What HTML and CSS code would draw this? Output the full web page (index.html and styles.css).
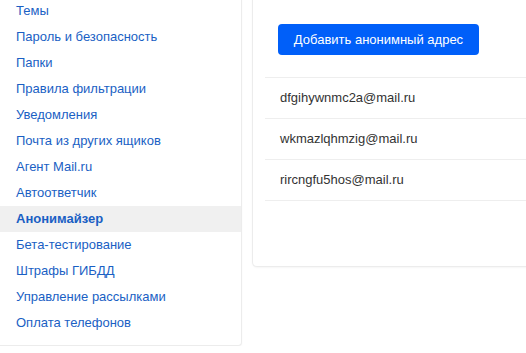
FILE: index.html
```html
<!DOCTYPE html>
<html lang="ru">
<head>
    <meta charset="UTF-8">
    <meta name="viewport" content="width=device-width, initial-scale=1.0">
    <title>Анонимайзер</title>
    <link rel="stylesheet" href="styles.css">
</head>
<body>
    <div class="page">
        <div class="settings-menu">
            <a class="menu-item" href="#">Личные данные</a>
            <a class="menu-item" href="#">Работа с письмами</a>
            <a class="menu-item" href="#">Темы</a>
            <a class="menu-item" href="#">Пароль и безопасность</a>
            <a class="menu-item" href="#">Папки</a>
            <a class="menu-item" href="#">Правила фильтрации</a>
            <a class="menu-item" href="#">Уведомления</a>
            <a class="menu-item" href="#">Почта из других ящиков</a>
            <a class="menu-item" href="#">Агент Mail.ru</a>
            <a class="menu-item" href="#">Автоответчик</a>
            <a class="menu-item menu-item-active" href="#">Анонимайзер</a>
            <a class="menu-item" href="#">Бета-тестирование</a>
            <a class="menu-item" href="#">Штрафы ГИБДД</a>
            <a class="menu-item" href="#">Управление рассылками</a>
            <a class="menu-item" href="#">Оплата телефонов</a>
        </div>
        <div class="content-card">
            <p class="content-text">Используйте анонимные адреса, чтобы не показывать свой адрес</p>
            <button class="add-btn">Добавить анонимный адрес</button>
            <ul class="address-list">
                <li class="address-row">dfgihywnmc2a@mail.ru</li>
                <li class="address-row">wkmazlqhmzig@mail.ru</li>
                <li class="address-row">rircngfu5hos@mail.ru</li>
            </ul>
        </div>
    </div>
</body>
</html>
```

FILE: styles.css
```css
:root {
    --link-color: #1a5fc4;
    --btn-color: #005ff9;
    --line-color: #eeeeee;
}
body{
    margin: 0;
    background: #fff;
    font-family: "Liberation Sans", Arial, sans-serif;
    overflow: hidden;
}
.page{
    display: flex;
    align-items: flex-start;
    gap: 10px;
    width: 700px;
    margin-top: -60px;
}
.settings-menu{
    display: flex;
    flex-direction: column;
    flex: none;
    width: 241px;
    padding: 5px 0 9px;
    background: #fff;
    border: 1px solid #ececec;
    border-left: none;
    border-radius: 0 0 4px 0;
    box-shadow: 0 1px 2px rgba(0,0,0,0.04);
}
.menu-item{
    display: block;
    height: 26px;
    line-height: 26px;
    padding-left: 16px;
    font-size: 13px;
    color: var(--link-color);
    text-decoration: none;
}
.menu-item-active{
    font-weight: bold;
    background: #f0f0f0;
}
.content-card{
    flex: 1;
    padding: 40px 0 65px 12px;
    background: #fff;
    border: 1px solid #ececec;
    border-right: none;
    border-radius: 0 0 0 5px;
    box-shadow: 0 1px 2px rgba(0,0,0,0.04);
}
.content-text{
    margin: 0 0 23px 13px;
    font-size: 13px;
    line-height: 20px;
    color: #555;
    white-space: nowrap;
}
.add-btn{
    display: block;
    height: 31px;
    width: 201px;
    margin-left: 13px;
    padding: 0;
    border: none;
    border-radius: 4px;
    background: var(--btn-color);
    color: #fff;
    font-family: inherit;
    font-size: 13px;
}
.address-list{
    list-style: none;
    margin: 22px 0 0;
    padding: 0;
}
.address-row{
    height: 40px;
    line-height: 40px;
    padding-left: 15px;
    border-top: 1px solid var(--line-color);
    font-size: 13px;
    color: #333;
}
.address-row:last-child{
    border-bottom: 1px solid var(--line-color);
}
```
